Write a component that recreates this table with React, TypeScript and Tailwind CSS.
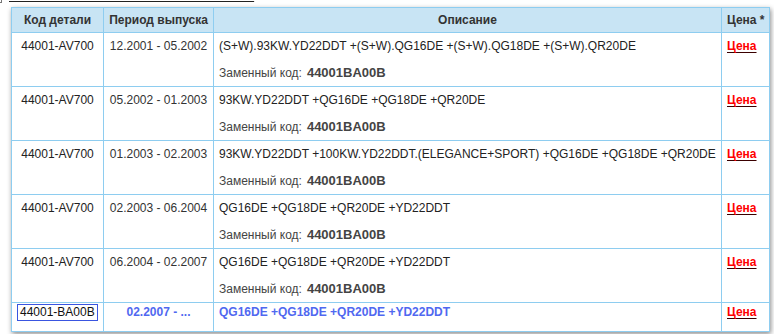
const rows = [
  {
    code: "44001-AV700",
    period: "12.2001 - 05.2002",
    desc: "(S+W).93KW.YD22DDT +(S+W).QG16DE +(S+W).QG18DE +(S+W).QR20DE",
  },
  {
    code: "44001-AV700",
    period: "05.2002 - 01.2003",
    desc: "93KW.YD22DDT +QG16DE +QG18DE +QR20DE",
  },
  {
    code: "44001-AV700",
    period: "01.2003 - 02.2003",
    desc: "93KW.YD22DDT +100KW.YD22DDT.(ELEGANCE+SPORT) +QG16DE +QG18DE +QR20DE",
  },
  {
    code: "44001-AV700",
    period: "02.2003 - 06.2004",
    desc: "QG16DE +QG18DE +QR20DE +YD22DDT",
  },
  {
    code: "44001-AV700",
    period: "06.2004 - 02.2007",
    desc: "QG16DE +QG18DE +QR20DE +YD22DDT",
  },
];

const cell = "border border-[#8ecdf0] align-top";

const PriceLink = () => (
  <a href="#" className="font-bold text-[#ff0000] underline decoration-[#3a0000] underline-offset-2">
    Цена
  </a>
);

export default function App() {
  return (
    <div className="bg-white h-[334px] overflow-hidden font-['Liberation_Sans',Arial,sans-serif] text-[12px] text-[#222]">
      {/* heading above the table, scrolled mostly out of view */}
      <div className="flex items-end h-[3px] overflow-hidden">
        <span className="w-[4px] h-[6px] border border-[#777] -ml-[2px] shrink-0" />
        <span className="ml-[7px] text-[13px] font-bold uppercase underline leading-[14px] text-[#222] whitespace-nowrap">
          Глушитель выхлопной системы
        </span>
      </div>

      <div className="pl-[11px] pt-[4px]">
        <table className="border-collapse border border-[#8ecdf0] shadow-[1px_2px_5px_rgba(0,0,0,0.45)] bg-white">
          <thead>
            <tr className="bg-[#c8e4f4] text-[#333] font-bold h-[25px]">
              <th className="border border-[#8ecdf0] w-[92px] font-bold">Код детали</th>
              <th className="border border-[#8ecdf0] w-[110px] font-bold">Период выпуска</th>
              <th className="border border-[#8ecdf0] w-[508px] font-bold">Описание</th>
              <th className="border border-[#8ecdf0] w-[48px] font-bold text-left pl-[5px]">Цена *</th>
            </tr>
          </thead>
          <tbody>
            {rows.map((r, i) => (
              <tr key={i} className="h-[54px]">
                <td className={`${cell} text-center pt-[4px] leading-[18px]`}>{r.code}</td>
                <td className={`${cell} text-center pt-[4px] leading-[18px] text-[#333]`}>{r.period}</td>
                <td className={`${cell} px-[5px] pt-[4px] leading-[18px] whitespace-nowrap`}>
                  <div>{r.desc}</div>
                  <div className="mt-[9px] text-[#444] flex items-baseline gap-[5px]">
                    Заменный код:
                    <span className="text-[13px] font-bold text-[#444]">44001BA00B</span>
                  </div>
                </td>
                <td className={`${cell} pl-[5px] pt-[4px] leading-[18px]`}>
                  <PriceLink />
                </td>
              </tr>
            ))}
            <tr className="h-[29px]">
              <td className={`${cell} align-middle pl-[5px]`}>
                <span className="inline-block border border-[#3a55e0] px-[2px] leading-[15px] text-[#111]">
                  44001-BA00B
                </span>
              </td>
              <td className={`${cell} align-middle text-center font-bold text-[#5068f0]`}>02.2007 - ...</td>
              <td className={`${cell} align-middle px-[5px] font-bold text-[#5068f0]`}>
                QG16DE +QG18DE +QR20DE +YD22DDT
              </td>
              <td className={`${cell} align-middle pl-[5px]`}>
                <PriceLink />
              </td>
            </tr>
          </tbody>
        </table>
      </div>
    </div>
  );
}
